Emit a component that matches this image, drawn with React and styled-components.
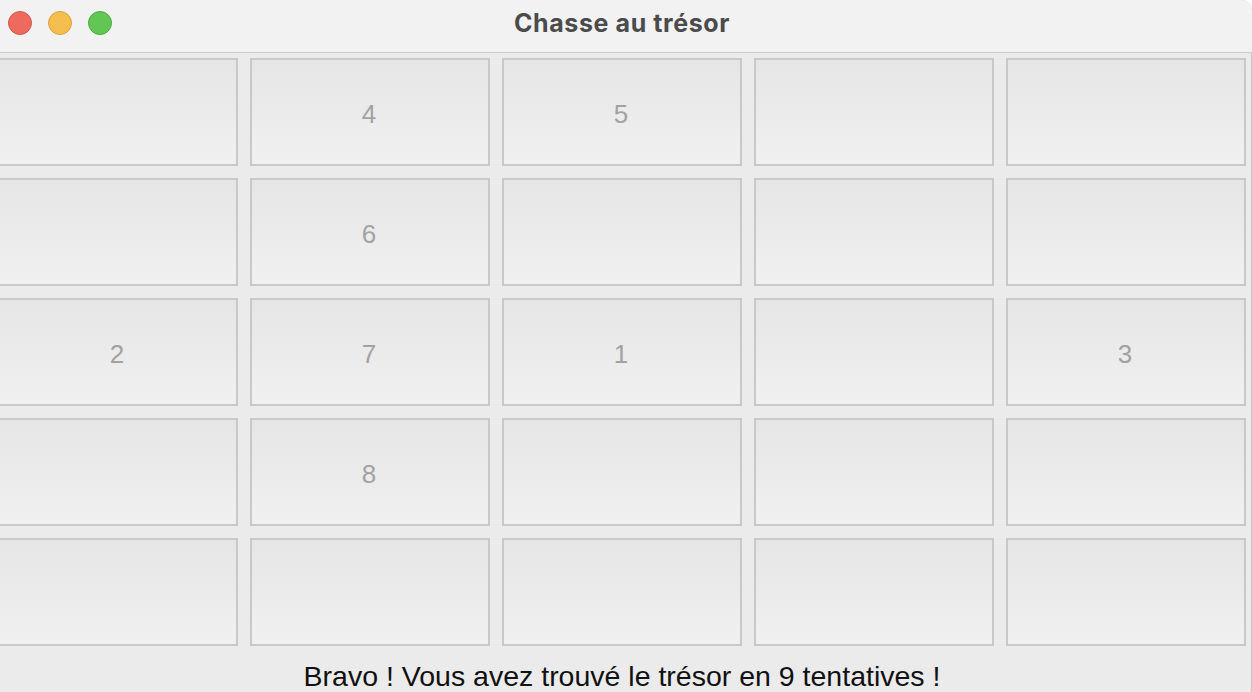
import React from 'react';
import styled, { createGlobalStyle } from 'styled-components';

const GlobalStyle = createGlobalStyle`
  html, body {
    margin: 0;
    padding: 0;
    background: #ffffff;
    overflow: hidden;
  }
`;

const board = [
  ['', '4', '5', '', ''],
  ['', '6', '', '', ''],
  ['2', '7', '1', '', '3'],
  ['', '8', '', '', ''],
  ['', '', '', '', ''],
];

const App = () => {
  return (
    <>
      <GlobalStyle />
      <Window>
        <TitleBar>
          <Lights>
            <Light color="#ee6a5f" edge="#d3574c" />
            <Light color="#f6be4f" edge="#d9a33d" />
            <Light color="#62c655" edge="#4fa843" />
          </Lights>
          <Title>Chasse au trésor</Title>
        </TitleBar>
        <Body>
          <Grid>
            {board.flat().map((value, i) => (
              <Cell key={i}>{value}</Cell>
            ))}
          </Grid>
          <Status>Bravo ! Vous avez trouvé le trésor en 9 tentatives !</Status>
        </Body>
      </Window>
    </>
  );
};

const Window = styled.div`
  margin-left: -8px;
  width: 1260px;
  height: 700px;
  background: #ebebeb;
  border-top-right-radius: 11px;
  border-bottom-right-radius: 11px;
  box-shadow: inset -1px 0 0 #c4c4c4;
  overflow: hidden;
  font-family: "Liberation Sans", Arial, sans-serif;
`;

const TitleBar = styled.div`
  position: relative;
  display: flex;
  align-items: center;
  justify-content: center;
  height: 52px;
  background: #f2f2f2;
  border-bottom: 1px solid #cbcbcb;
`;

const Lights = styled.div`
  position: absolute;
  left: 16px;
  top: 11px;
  display: flex;
  gap: 16px;
`;

const Light = styled.span`
  display: block;
  width: 22px;
  height: 22px;
  border-radius: 50%;
  background: ${(p) => p.color};
  border: 1px solid ${(p) => p.edge};
`;

const Title = styled.div`
  font-family: Inter, "Liberation Sans", sans-serif;
  font-size: 25px;
  font-weight: 700;
  letter-spacing: 0.6px;
  color: #4b4b4b;
  margin-top: -6px;
`;

const Body = styled.div`
  padding: 5px 6px 0;
`;

const Grid = styled.div`
  display: grid;
  grid-template-columns: repeat(5, 240px);
  grid-auto-rows: 108px;
  gap: 12px;
`;

const Cell = styled.div`
  box-sizing: border-box;
  display: flex;
  align-items: center;
  justify-content: center;
  border: 2px solid #c9c9c9;
  background: linear-gradient(to bottom, #e6e6e6, #f0f0f0);
  color: #a2a2a2;
  font-size: 26px;
  padding: 4px 2px 0 0;
`;

const Status = styled.div`
  margin-top: 14px;
  text-align: center;
  font-size: 28.5px;
  line-height: 32px;
  color: #111111;
`;

export default App;
